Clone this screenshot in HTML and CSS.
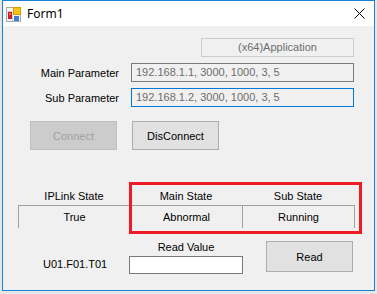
FILE: index.html
```html
<html lang="en">
    <head>
        <title>Form1</title>
        <link rel="stylesheet" href="styles.css">
    </head>
    <body>
        <div class="window">
            <div class="titlebar">
                <svg class="app-icon" viewBox="0 0 16 16">
                    <rect x="0.5" y="1.5" width="14" height="14" fill="#f6f6f6" stroke="#a8a8a8"/>
                    <line x1="0.5" y1="5.5" x2="6" y2="5.5" stroke="#c8c8c8"/>
                    <line x1="6.5" y1="9" x2="6.5" y2="15" stroke="#c8c8c8"/>
                    <rect x="2" y="6" width="4" height="7" fill="#c9202a"/>
                    <rect x="3" y="7" width="2" height="2" fill="#e86a6a"/>
                    <rect x="7.5" y="1.5" width="7" height="7" fill="#f7c21c" stroke="#d99a00"/>
                    <rect x="8" y="10" width="5" height="5" fill="#3d7fd8"/>
                </svg>
                <span class="title">Form1</span>
                <svg class="close" viewBox="0 0 11 11">
                    <path d="M0.5 0.5 L10.5 10.5 M10.5 0.5 L0.5 10.5" stroke="#000" stroke-width="1"/>
                </svg>
            </div>
            <div class="client">
                <div class="app-row">
                    <div class="app-box">(x64)Application</div>
                </div>
                <div class="param-row">
                    <span class="param-label">Main Parameter</span>
                    <div class="textbox">192.168.1.1, 3000, 1000, 3, 5</div>
                </div>
                <div class="param-row">
                    <span class="param-label">Sub Parameter</span>
                    <div class="textbox focused">192.168.1.2, 3000, 1000, 3, 5</div>
                </div>
                <div class="button-row">
                    <button class="btn" disabled>Connect</button>
                    <button class="btn">DisConnect</button>
                </div>
                <div class="state-panel">
                    <div class="state-head">
                        <span>IPLink State</span>
                        <span>Main State</span>
                        <span>Sub State</span>
                    </div>
                    <div class="state-grid">
                        <div class="cell">True</div>
                        <div class="cell">Abnormal</div>
                        <div class="cell">Running</div>
                    </div>
                    <div class="highlight"></div>
                </div>
                <div class="read-row">
                    <span class="read-tag">U01.F01.T01</span>
                    <div class="read-field">
                        <span class="read-label">Read Value</span>
                        <div class="read-input"></div>
                    </div>
                    <button class="btn read-btn">Read</button>
                </div>
            </div>
        </div>
    </body>
</html>
```

FILE: styles.css
```css
body {
    margin: 0;
    background-color: #e6e6e6;
    font-family: "Liberation Sans", Arial, sans-serif;
    font-size: 11px;
    color: #000;
}

.window {
    margin-left: 2px;
    width: 373px;
    height: 291px;
    box-sizing: border-box;
    border: 1px solid #1883d7;
    background-color: #f0f0f0;
    display: flex;
    flex-direction: column;
}

.titlebar {
    flex: none;
    height: 25px;
    background-color: #fff;
    display: flex;
    align-items: center;
}

.app-icon {
    width: 16px;
    height: 16px;
    margin-left: 3px;
}

.title {
    margin-left: 5px;
    font-family: "Noto Sans", sans-serif;
    font-size: 12px;
}

.close {
    margin-left: auto;
    margin-right: 9px;
    width: 11px;
    height: 11px;
}

.client {
    display: flex;
    flex-direction: column;
}

.app-row {
    margin-top: 12px;
    display: flex;
    justify-content: flex-end;
    padding-right: 20px;
}

.app-box {
    width: 153px;
    height: 19px;
    box-sizing: border-box;
    border: 1px solid #cccccc;
    color: #6d6d6d;
    text-align: center;
    line-height: 17px;
}

.param-row {
    display: flex;
    align-items: center;
    margin-top: 6px;
}

.param-label {
    width: 116px;
    text-align: right;
}

.textbox {
    margin-left: 12px;
    width: 223px;
    height: 19px;
    box-sizing: border-box;
    border: 1px solid #7a7a7a;
    padding-left: 4px;
    line-height: 17px;
    color: #6d6d6d;
}

.textbox.focused {
    border-color: #0078d7;
}

.button-row {
    margin-top: 14px;
    padding-left: 27px;
    display: flex;
    gap: 15px;
}

.btn {
    width: 87px;
    height: 29px;
    box-sizing: border-box;
    border: 1px solid #adadad;
    background-color: #e1e1e1;
    font-family: inherit;
    font-size: 11px;
    color: #000;
    padding: 0;
    border-radius: 0;
}

.btn:disabled {
    background-color: #cccccc;
    border-color: #bfbfbf;
    color: #a0a0a0;
}

.state-panel {
    position: relative;
    margin-top: 38px;
    padding-left: 15px;
}

.state-head {
    display: grid;
    grid-template-columns: 112px 112px 112px;
    height: 17px;
    line-height: 17px;
    text-align: center;
}

.state-grid {
    display: grid;
    grid-template-columns: 112px 112px 112px;
    width: 337px;
    box-sizing: border-box;
    border-top: 1px solid #a0a0a0;
    border-left: 1px solid #a0a0a0;
}

.cell {
    height: 22px;
    line-height: 22px;
    text-align: center;
    border-right: 1px solid #a0a0a0;
}

.highlight {
    position: absolute;
    top: -6px;
    left: 126px;
    width: 233px;
    height: 52px;
    box-sizing: border-box;
    border: 3px solid #ed1c24;
}

.read-row {
    margin-top: 12px;
    display: flex;
    align-items: flex-start;
}

.read-tag {
    margin-left: 40px;
    margin-top: 17px;
    width: 86px;
    line-height: 14px;
}

.read-field {
    width: 114px;
    display: flex;
    flex-direction: column;
    align-items: center;
}

.read-label {
    line-height: 14px;
}

.read-input {
    margin-top: 2px;
    width: 114px;
    height: 18px;
    box-sizing: border-box;
    border: 1px solid #7a7a7a;
    background-color: #fff;
}

.read-btn {
    margin-left: 23px;
    margin-top: 1px;
    height: 31px;
}
```
